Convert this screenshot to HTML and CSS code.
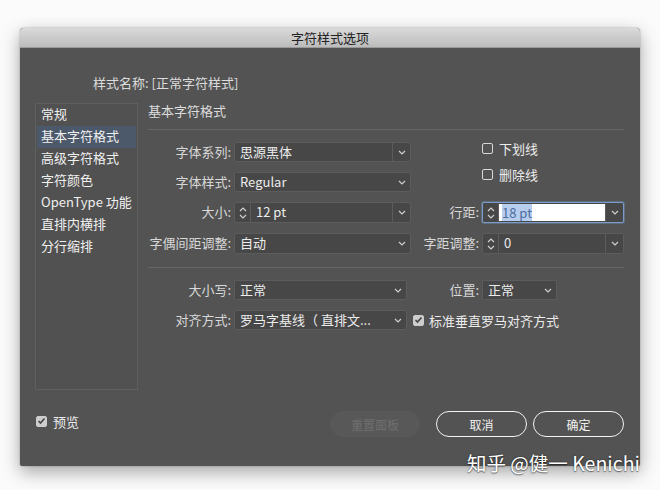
FILE: index.html
```html
<!DOCTYPE html>
<html lang="zh-CN">
<head>
  <meta charset="UTF-8" />
  <title>字符样式选项</title>
  <link rel="stylesheet" href="styles.css">
</head>
<body>
  <div class="window">
    <div class="titlebar">字符样式选项</div>
    <div class="content">
      <div class="style-name">样式名称: [正常字符样式]</div>

      <div class="main">
        <ul class="cat-list">
          <li>常规</li>
          <li class="selected">基本字符格式</li>
          <li>高级字符格式</li>
          <li>字符颜色</li>
          <li>OpenType 功能</li>
          <li>直排内横排</li>
          <li>分行缩排</li>
        </ul>

        <div class="panel">
          <div class="panel-title">基本字符格式</div>
          <div class="sep"></div>

          <div class="grid-top">
            <div class="lbl left">字体系列:</div>
            <div class="field left">
              <span class="val">思源黑体</span>
              <span class="arrow divided"><svg width="8" height="5" viewBox="0 0 8 5"><path d="M1 1l3 3 3-3" /></svg></span>
            </div>
            <div class="checks">
              <div class="check"><span class="box"></span>下划线</div>
              <div class="check"><span class="box"></span>删除线</div>
            </div>

            <div class="lbl left">字体样式:</div>
            <div class="field left">
              <span class="val">Regular</span>
              <span class="arrow"><svg width="8" height="5" viewBox="0 0 8 5"><path d="M1 1l3 3 3-3" /></svg></span>
            </div>

            <div class="lbl left">大小:</div>
            <div class="field left">
              <span class="spin"><svg width="8" height="14" viewBox="0 0 8 14"><path d="M1 5l3-3 3 3M1 9l3 3 3-3" /></svg></span>
              <span class="val">12 pt</span>
              <span class="arrow divided"><svg width="8" height="5" viewBox="0 0 8 5"><path d="M1 1l3 3 3-3" /></svg></span>
            </div>
            <div class="lbl right">行距:</div>
            <div class="field right focused">
              <span class="spin"><svg width="8" height="14" viewBox="0 0 8 14"><path d="M1 5l3-3 3 3M1 9l3 3 3-3" /></svg></span>
              <span class="val input"><span class="sel-text">18 pt</span></span>
              <span class="arrow divided"><svg width="8" height="5" viewBox="0 0 8 5"><path d="M1 1l3 3 3-3" /></svg></span>
            </div>

            <div class="lbl left">字偶间距调整:</div>
            <div class="field left">
              <span class="val">自动</span>
              <span class="arrow"><svg width="8" height="5" viewBox="0 0 8 5"><path d="M1 1l3 3 3-3" /></svg></span>
            </div>
            <div class="lbl right">字距调整:</div>
            <div class="field right">
              <span class="spin"><svg width="8" height="14" viewBox="0 0 8 14"><path d="M1 5l3-3 3 3M1 9l3 3 3-3" /></svg></span>
              <span class="val">0</span>
              <span class="arrow divided"><svg width="8" height="5" viewBox="0 0 8 5"><path d="M1 1l3 3 3-3" /></svg></span>
            </div>
          </div>

          <div class="sep"></div>

          <div class="grid-bottom">
            <div class="lbl">大小写:</div>
            <div class="field">
              <span class="val">正常</span>
              <span class="arrow"><svg width="8" height="5" viewBox="0 0 8 5"><path d="M1 1l3 3 3-3" /></svg></span>
            </div>
            <div class="lbl">位置:</div>
            <div class="field">
              <span class="val">正常</span>
              <span class="arrow"><svg width="8" height="5" viewBox="0 0 8 5"><path d="M1 1l3 3 3-3" /></svg></span>
            </div>

            <div class="lbl">对齐方式:</div>
            <div class="field">
              <span class="val">罗马字基线（ 直排文...</span>
              <span class="arrow"><svg width="8" height="5" viewBox="0 0 8 5"><path d="M1 1l3 3 3-3" /></svg></span>
            </div>
            <div class="check wide"><span class="box checked"><svg width="9" height="8" viewBox="0 0 9 8"><path d="M1.5 4l2 2 4-4.5" /></svg></span>标准垂直罗马对齐方式</div>
          </div>
        </div>
      </div>

      <div class="footer">
        <div class="check preview"><span class="box checked"><svg width="9" height="8" viewBox="0 0 9 8"><path d="M1.5 4l2 2 4-4.5" /></svg></span>预览</div>
        <div class="buttons">
          <button class="btn disabled">重置面板</button>
          <button class="btn cancel">取消</button>
          <button class="btn">确定</button>
        </div>
      </div>
    </div>
  </div>

  <div class="watermark">知乎 @健一 Kenichi</div>
</body>
</html>
```

FILE: styles.css
```css
body { margin: 0; background: #fbfbfb; font-family: "Noto Sans CJK SC", "Noto Sans", sans-serif; font-size: 13px; color: #e6e6e6; position: relative; width: 660px; height: 490px; overflow: hidden; }

.window { margin: 28px 0 0 20px; width: 620px; height: 438px; background: #535353; border-radius: 4px 4px 2px 2px; box-shadow: 0 6px 18px rgba(0,0,0,0.35), 0 0 2px rgba(0,0,0,0.3); display: flex; flex-direction: column; overflow: hidden; }
.titlebar { height: 20px; line-height: 20px; text-align: center; font-size: 13px; color: #222; background: linear-gradient(#dadada, #bcbcbc); border-bottom: 1px solid #9a9a9a; box-sizing: border-box; }
.content { flex: 1; padding: 27px 16px 0 15px; display: flex; flex-direction: column; }

.style-name { line-height: 16px; padding-left: 58px; color: #dcdcdc; }

.main { display: flex; gap: 10px; margin-top: 12px; }
.cat-list { list-style: none; margin: 0; padding: 0 1px 1px; width: 104px; height: 287px; box-sizing: border-box; border: 1px solid #5f5f5f; background: #515151; }
.cat-list li { height: 22px; line-height: 20px; padding-left: 4px; color: #f0f0f0; white-space: nowrap; }
.cat-list li.selected { background: #4b596b; }

.panel { flex: 1; }
.panel-title { line-height: 16px; color: #dedede; }
.sep { height: 1px; background: #666; margin: 10px 0 12px; }
.grid-top + .sep { margin-top: 13px; }

.grid-top { display: grid; grid-template-columns: 83px 177px 65px 142px; grid-template-rows: 20px 20px 21px 21px; column-gap: 3px; row-gap: 10px; }
.grid-top .lbl.left { grid-column: 1; }
.grid-top .field.left { grid-column: 2; }
.grid-top .lbl.right { grid-column: 3; }
.grid-top .field.right { grid-column: 4; }
.grid-bottom { display: grid; grid-template-columns: 83px 173px 69px 75px; grid-template-rows: 20px 20px; column-gap: 3px; row-gap: 10px; }

.lbl { text-align: right; line-height: 20px; color: #d8d8d8; white-space: nowrap; }
.field { display: flex; align-items: stretch; background: #474747; border: 1px solid #5c5c5c; border-radius: 2px; box-sizing: border-box; height: 100%; overflow: hidden; }
.val { flex: 1; padding-left: 5px; line-height: 18px; color: #ececec; white-space: nowrap; overflow: hidden; }
.arrow { width: 17px; display: flex; align-items: center; justify-content: center; }
.arrow.divided { border-left: 1px solid #5c5c5c; }
.arrow svg, .spin svg { fill: none; stroke: #cfcfcf; stroke-width: 1.2; }
.spin { width: 15px; display: flex; align-items: center; justify-content: center; border-right: 1px solid #5c5c5c; }

.field.focused { border: 1.5px solid #7a9ccc; box-shadow: 0 0 0 1px rgba(122,156,204,0.35); }
.val.input { background: #fff; padding-left: 3px; margin: 1px 0; }
.sel-text { background: #b6cdee; color: #4d6e9e; }

.checks { grid-column: 4; grid-row: 1 / 3; display: flex; flex-direction: column; gap: 10px; margin-top: -2px; }
.check { display: flex; align-items: center; gap: 6px; height: 16px; color: #ececec; white-space: nowrap; }
.box { width: 11px; height: 11px; box-sizing: border-box; border: 1px solid #d8d8d8; border-radius: 2px; display: flex; align-items: center; justify-content: center; }
.box.checked { background: #cdcdcd; border-color: #cdcdcd; }
.box.checked svg { fill: none; stroke: #444; stroke-width: 1.6; }
.check.wide { grid-column: 3 / 5; margin-left: 3px; height: 20px; gap: 5px; }

.footer { display: flex; align-items: center; justify-content: space-between; margin-top: 21px; height: 26px; }
.check.preview { margin: 0 0 6px 1px; gap: 6px; }
.buttons { display: flex; gap: 6px; }
.btn { width: 91px; height: 26px; border-radius: 13px; border: 1.5px solid #f2f2f2; background: transparent; color: #f2f2f2; font-family: inherit; font-size: 12px; padding: 0; }
.btn.disabled { width: 90px; margin-right: 10px; border-color: #585858; background: #585858; color: #6f6f6f; }

.watermark { position: absolute; left: 467px; top: 448px; font-size: 19.5px; color: #fff; white-space: nowrap; text-shadow: 0 0 2px rgba(0,0,0,0.55), 0 1px 1px rgba(0,0,0,0.4); }
```
